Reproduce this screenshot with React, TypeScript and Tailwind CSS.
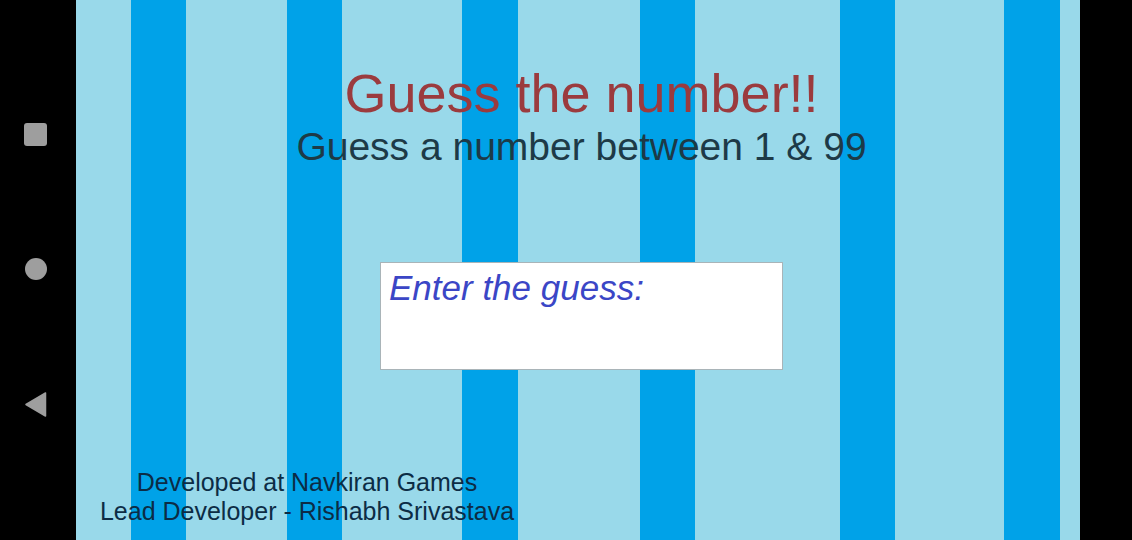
import React from 'react';

const font = { fontFamily: '"Liberation Sans", Arial, sans-serif' };

const NavBar: React.FC = () => (
  <div className="w-[76px] h-full bg-black flex flex-col items-center pt-[123px] pr-[5px] shrink-0">
    <div className="w-[23px] h-[23px] rounded-[3px] bg-[#9e9e9e]" />
    <div className="w-[22px] h-[22px] rounded-full bg-[#9e9e9e] mt-[112px]" />
    <svg width="22" height="25" viewBox="0 0 22 25" className="mt-[112px]">
      <polygon points="20.5,1 20.5,24 1,12.5" fill="#9e9e9e" stroke="#9e9e9e" strokeWidth="1.5" strokeLinejoin="round" />
    </svg>
  </div>
);

// background stripes: light turquoise with blue bars
const Stripes: React.FC = () => (
  <div className="absolute inset-0 flex bg-[#99d9ea]">
    <div className="w-[55px]" />
    <div className="w-[55px] bg-[#00a2e8]" />
    <div className="w-[101px]" />
    <div className="w-[55px] bg-[#00a2e8]" />
    <div className="w-[120px]" />
    <div className="w-[56px] bg-[#00a2e8]" />
    <div className="w-[122px]" />
    <div className="w-[55px] bg-[#00a2e8]" />
    <div className="w-[145px]" />
    <div className="w-[55px] bg-[#00a2e8]" />
    <div className="w-[109px]" />
    <div className="w-[56px] bg-[#00a2e8]" />
  </div>
);

export default function App() {
  return (
    <div className="w-[1132px] h-[540px] flex bg-black overflow-hidden" style={font}>
      <NavBar />

      <div className="relative w-[1004px] h-full shrink-0">
        <Stripes />

        <div className="relative h-full flex flex-col pt-[66px] pb-[14px]">
          <div className="flex flex-col items-center pl-[7px]">
            <h1 className="text-[54px] leading-none text-[#9b3b3e] whitespace-nowrap">Guess the number!!</h1>
            <p className="mt-[7px] text-[39px] leading-none text-[#1d3a47] whitespace-nowrap">
              Guess a number between 1 &amp; 99
            </p>

            <div className="mt-[96px] w-[403px] h-[108px] bg-white border border-[#a9b4b8] pt-[5px] pl-[8px]">
              <input
                className="w-full bg-transparent outline-none text-[35px] leading-none italic text-[#3b46c6] placeholder:text-[#3b46c6]"
                style={font}
                placeholder="Enter the guess:"
              />
            </div>
          </div>

          <div className="mt-auto w-[462px] text-center text-[25px] leading-[29px] text-[#0c2c45]">
            <p>Developed at Navkiran Games</p>
            <p>Lead Developer - Rishabh Srivastava</p>
          </div>
        </div>
      </div>

      <div className="flex-1 bg-black" />
    </div>
  );
}
